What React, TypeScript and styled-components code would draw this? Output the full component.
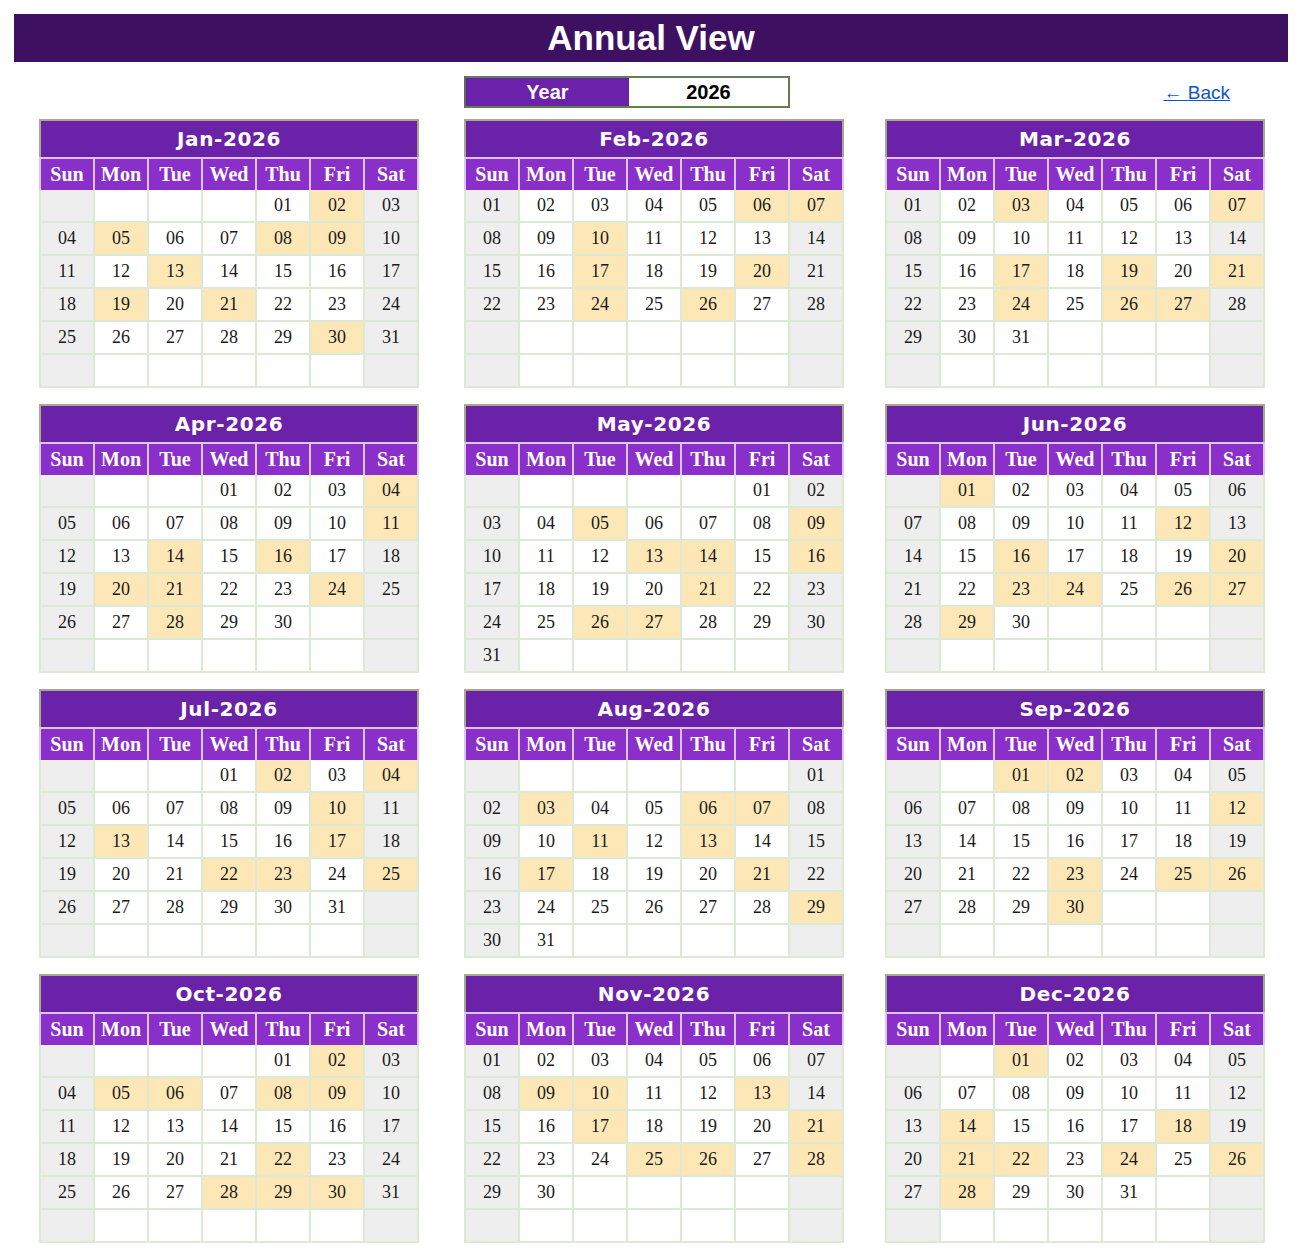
import React from "react";
import styled, { createGlobalStyle } from "styled-components";

const GlobalStyle = createGlobalStyle`
  html, body { margin: 0; padding: 0; background: #ffffff; }
  body { font-family: "Liberation Sans", Arial, sans-serif; }
`;

const Page = styled.div`
  width: 1302px;
  padding: 14px 0 14px;
  box-sizing: border-box;
`;

const Banner = styled.div`
  margin: 0 14px;
  height: 48px;
  background: #3d1062;
  color: #ffffff;
  display: flex;
  align-items: center;
  justify-content: center;
  font-family: "Liberation Sans", Arial, sans-serif;
  font-weight: 700;
  font-size: 35px;
`;

const Columns = styled.div`
  display: grid;
  grid-template-columns: 425px 421px 380px;
  padding-left: 39px;
`;

const Toolbar = styled(Columns)`
  margin-top: 14px;
  height: 32px;
  align-items: center;
`;

const YearBox = styled.div`
  grid-column: 2;
  width: 326px;
  height: 32px;
  box-sizing: border-box;
  display: grid;
  grid-template-columns: 163px 1fr;
  border: 2px solid #62804a;
  border-left-color: #5c6a5a;
  border-top-color: #6a7a60;
`;

const YearLabel = styled.div`
  background: #6a22a8;
  color: #ffffff;
  font-weight: 700;
  font-size: 20px;
  display: flex;
  align-items: center;
  justify-content: center;
`;

const YearValue = styled.div`
  background: #ffffff;
  color: #000000;
  font-weight: 700;
  font-size: 20px;
  display: flex;
  align-items: center;
  justify-content: center;
`;

const BackLink = styled.a`
  grid-column: 3;
  justify-self: end;
  margin-right: 35px;
  margin-top: 2px;
  color: #1155cc;
  font-size: 19px;
  text-decoration: underline;
  cursor: pointer;
`;

const CalendarGrid = styled(Columns)`
  margin-top: 11px;
  row-gap: 16px;
`;

const Calendar = styled.div`
  width: 380px;
`;

const MonthTitle = styled.div`
  height: 38px;
  box-sizing: border-box;
  background: #6a22a8;
  border: 2px solid #a9a88e;
  border-bottom: none;
  color: #ffffff;
  display: flex;
  align-items: center;
  justify-content: center;
  font-family: "DejaVu Sans", Verdana, sans-serif;
  font-weight: 700;
  font-size: 20px;
  letter-spacing: 0.6px;
`;

const HeaderRow = styled.div`
  display: grid;
  grid-template-columns: repeat(7, 1fr);
  gap: 2px;
  padding: 2px 2px 0;
  background: #dcc5f0;
`;

const HeaderCell = styled.div`
  height: 31px;
  background: #8a2fc9;
  color: #ffffff;
  display: flex;
  align-items: center;
  justify-content: center;
  font-family: "Liberation Serif", "Times New Roman", serif;
  font-weight: 700;
  font-size: 20px;
`;

const Body = styled.div`
  display: grid;
  grid-template-columns: repeat(7, 1fr);
  grid-auto-rows: 31px;
  gap: 2px;
  padding: 0 2px 2px;
  background: #dbe9d5;
`;

const DayCell = styled.div<{ $tone: "plain" | "weekend" | "mark" }>`
  background: ${(p) =>
    p.$tone === "mark" ? "#fde7b6" : p.$tone === "weekend" ? "#eeeeee" : "#ffffff"};
  color: #1a1a1a;
  display: flex;
  align-items: center;
  justify-content: center;
  font-family: "Liberation Serif", "Times New Roman", serif;
  font-size: 18px;
`;

const MONTHS = ["Jan", "Feb", "Mar", "Apr", "May", "Jun", "Jul", "Aug", "Sep", "Oct", "Nov", "Dec"];
const WEEKDAYS = ["Sun", "Mon", "Tue", "Wed", "Thu", "Fri", "Sat"];

const MARKED: number[][] = [
  [2, 5, 8, 9, 13, 19, 21, 30],
  [6, 7, 10, 17, 20, 24, 26],
  [3, 7, 17, 19, 21, 24, 26, 27],
  [4, 11, 14, 16, 20, 21, 24, 28],
  [5, 9, 13, 14, 16, 21, 26, 27],
  [1, 12, 16, 20, 23, 24, 26, 27, 29],
  [2, 4, 10, 13, 17, 22, 23, 25],
  [3, 6, 7, 11, 13, 17, 21, 29],
  [1, 2, 12, 23, 25, 26, 30],
  [2, 5, 6, 8, 9, 22, 28, 29, 30],
  [9, 10, 13, 17, 21, 25, 26, 28],
  [1, 14, 18, 21, 22, 24, 26, 28],
];

const YEAR = 2026;

function MonthCalendar({ month }: { month: number }) {
  const first = new Date(YEAR, month, 1).getDay();
  const days = new Date(YEAR, month + 1, 0).getDate();
  const cells = Array.from({ length: 42 }, (_, i) => {
    const d = i - first + 1;
    return d >= 1 && d <= days ? d : null;
  });
  return (
    <Calendar>
      <MonthTitle>
        {MONTHS[month]}-{YEAR}
      </MonthTitle>
      <HeaderRow>
        {WEEKDAYS.map((w) => (
          <HeaderCell key={w}>{w}</HeaderCell>
        ))}
      </HeaderRow>
      <Body>
        {cells.map((d, i) => {
          const col = i % 7;
          const tone =
            d !== null && MARKED[month].includes(d)
              ? "mark"
              : col === 0 || col === 6
              ? "weekend"
              : "plain";
          return (
            <DayCell key={i} $tone={tone}>
              {d !== null ? String(d).padStart(2, "0") : ""}
            </DayCell>
          );
        })}
      </Body>
    </Calendar>
  );
}

export default function App() {
  return (
    <>
      <GlobalStyle />
      <Page>
        <Banner>Annual View</Banner>
        <Toolbar>
          <YearBox>
            <YearLabel>Year</YearLabel>
            <YearValue>{YEAR}</YearValue>
          </YearBox>
          <BackLink>← Back</BackLink>
        </Toolbar>
        <CalendarGrid>
          {MONTHS.map((_, m) => (
            <MonthCalendar key={m} month={m} />
          ))}
        </CalendarGrid>
      </Page>
    </>
  );
}
